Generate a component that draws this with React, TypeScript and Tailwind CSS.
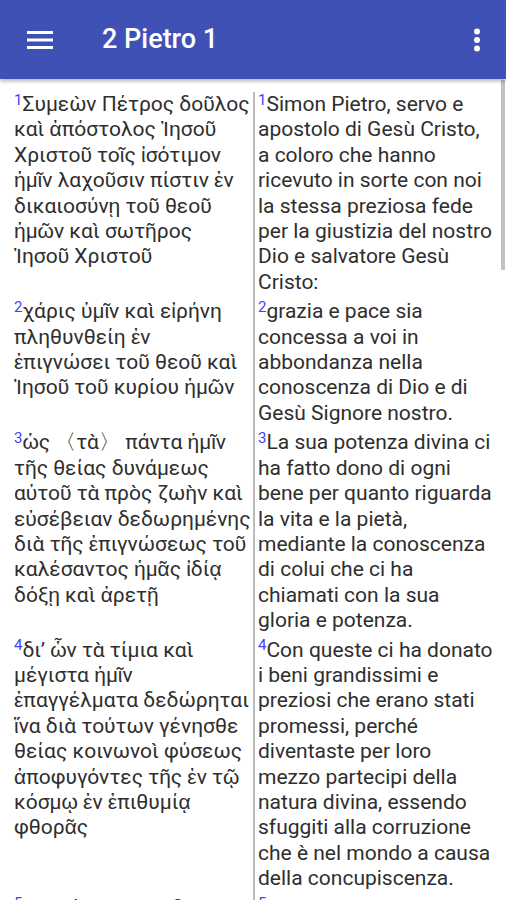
const verses = [
  {
    n: 1,
    gr: [
      'Συμεὼν Πέτρος δοῦλος',
      'καὶ ἀπόστολος Ἰησοῦ',
      'Χριστοῦ τοῖς ἰσότιμον',
      'ἡμῖν λαχοῦσιν πίστιν ἐν',
      'δικαιοσύνῃ τοῦ θεοῦ',
      'ἡμῶν καὶ σωτῆρος',
      'Ἰησοῦ Χριστοῦ',
    ],
    it: [
      'Simon Pietro, servo e',
      'apostolo di Gesù Cristo,',
      'a coloro che hanno',
      'ricevuto in sorte con noi',
      'la stessa preziosa fede',
      'per la giustizia del nostro',
      'Dio e salvatore Gesù',
      'Cristo:',
    ],
  },
  {
    n: 2,
    gr: ['χάρις ὑμῖν καὶ εἰρήνη', 'πληθυνθείη ἐν', 'ἐπιγνώσει τοῦ θεοῦ καὶ', 'Ἰησοῦ τοῦ κυρίου ἡμῶν'],
    it: [
      'grazia e pace sia',
      'concessa a voi in',
      'abbondanza nella',
      'conoscenza di Dio e di',
      'Gesù Signore nostro.',
    ],
  },
  {
    n: 3,
    gr: [
      'ὡς 〈τὰ〉 πάντα ἡμῖν',
      'τῆς θείας δυνάμεως',
      'αὐτοῦ τὰ πρὸς ζωὴν καὶ',
      'εὐσέβειαν δεδωρημένης',
      'διὰ τῆς ἐπιγνώσεως τοῦ',
      'καλέσαντος ἡμᾶς ἰδίᾳ',
      'δόξῃ καὶ ἀρετῇ',
    ],
    it: [
      'La sua potenza divina ci',
      'ha fatto dono di ogni',
      'bene per quanto riguarda',
      'la vita e la pietà,',
      'mediante la conoscenza',
      'di colui che ci ha',
      'chiamati con la sua',
      'gloria e potenza.',
    ],
  },
  {
    n: 4,
    gr: [
      'δι’ ὧν τὰ τίμια καὶ',
      'μέγιστα ἡμῖν',
      'ἐπαγγέλματα δεδώρηται',
      'ἵνα διὰ τούτων γένησθε',
      'θείας κοινωνοὶ φύσεως',
      'ἀποφυγόντες τῆς ἐν τῷ',
      'κόσμῳ ἐν ἐπιθυμίᾳ',
      'φθορᾶς',
    ],
    it: [
      'Con queste ci ha donato',
      'i beni grandissimi e',
      'preziosi che erano stati',
      'promessi, perché',
      'diventaste per loro',
      'mezzo partecipi della',
      'natura divina, essendo',
      'sfuggiti alla corruzione',
      'che è nel mondo a causa',
      'della concupiscenza.',
    ],
  },
  {
    n: 5,
    gr: ['καὶ αὐτὸ τοῦτο δὲ', 'σπουδὴν πᾶσαν'],
    it: ['Per questo mettete ogni', 'impegno per aggiungere'],
  },
];

function Num({ n }: { n: number }) {
  return <sup className="text-[15px] text-[#3f3fff] top-[-0.42em]">{n}</sup>;
}

function Lines({ n, lines }: { n: number; lines: string[] }) {
  return (
    <>
      {lines.map((l, i) => (
        <div key={i} className="whitespace-nowrap">
          {i === 0 && <Num n={n} />}
          {l}
        </div>
      ))}
    </>
  );
}

export default function App() {
  return (
    <div className="relative w-[506px] h-[900px] overflow-hidden bg-white font-['Roboto',sans-serif]">
      <header className="relative z-10 h-[79px] bg-[#3f51b5] flex items-center text-white shadow-[0_2px_4px_rgba(0,0,0,0.3)]">
        <div className="w-[80px] flex justify-center">
          <svg width="26" height="20" viewBox="0 0 26 20">
            <rect x="0" y="1" width="26" height="3" fill="white" />
            <rect x="0" y="8.5" width="26" height="3" fill="white" />
            <rect x="0" y="16" width="26" height="3" fill="white" />
          </svg>
        </div>
        <h1 className="ml-[22px] text-[27px] font-medium">2 Pietro 1</h1>
        <div className="ml-auto mr-[25px]">
          <svg width="8" height="24" viewBox="0 0 8 24">
            <circle cx="4" cy="3.5" r="3" fill="white" />
            <circle cx="4" cy="12" r="3" fill="white" />
            <circle cx="4" cy="20.5" r="3" fill="white" />
          </svg>
        </div>
      </header>

      <main className="pt-[13px] text-[21px] leading-[25.4px] text-[#2e2e2e]">
        {verses.map((v) => (
          <div key={v.n} className="grid grid-cols-[253px_1fr]">
            <div className="pl-[14px] pr-[2px] pb-1 overflow-hidden">
              <Lines n={v.n} lines={v.gr} />
            </div>
            <div className="border-l-[2px] border-[#bcbcbc] pl-[3px] pr-[8px] pb-1 overflow-hidden">
              <Lines n={v.n} lines={v.it} />
            </div>
          </div>
        ))}
      </main>

      <div className="absolute right-[1px] top-[80px] w-[4px] h-[190px] bg-[#c2c2c2]" />
    </div>
  );
}
